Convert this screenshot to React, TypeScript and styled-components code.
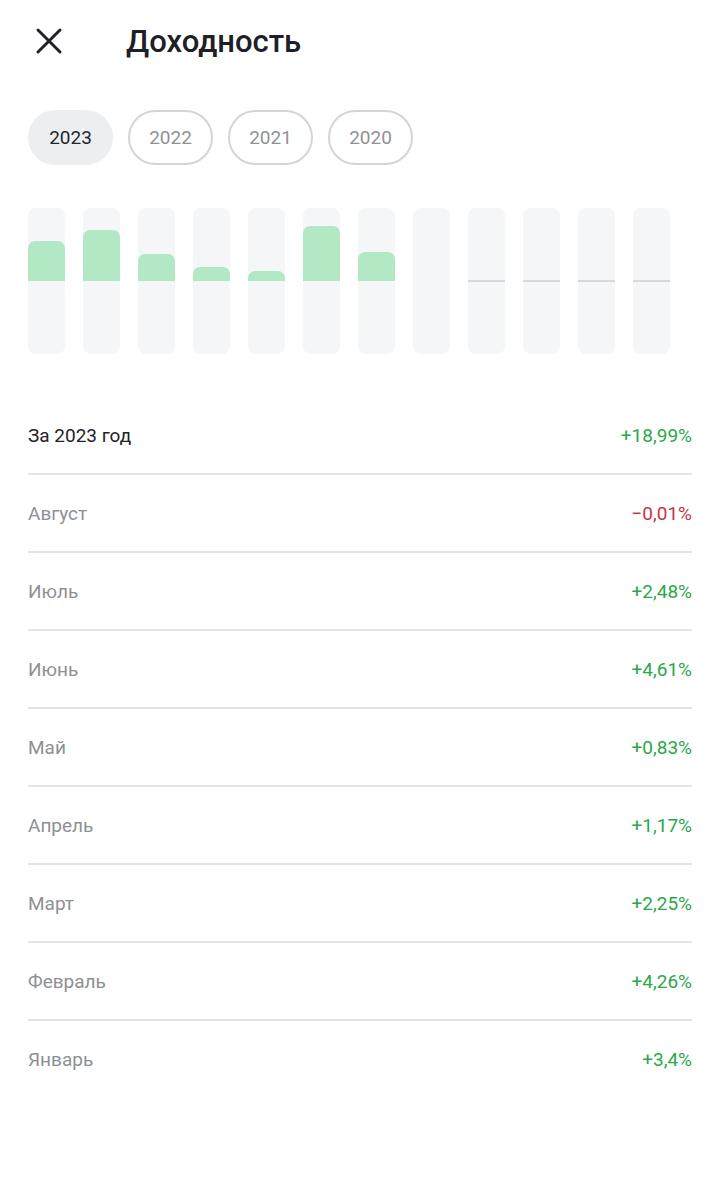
import React from "react";
import styled, { createGlobalStyle } from "styled-components";

const GlobalStyle = createGlobalStyle`
  body {
    margin: 0;
    background: #ffffff;
    font-family: Roboto, "Noto Sans", "Liberation Sans", sans-serif;
    -webkit-font-smoothing: antialiased;
  }
`;

const Page = styled.div`
  width: 720px;
  min-height: 1187px;
  background: #ffffff;
`;

const Header = styled.header`
  display: flex;
  align-items: center;
  height: 82px;
  padding-left: 35px;
`;

const CloseButton = styled.button`
  display: flex;
  align-items: center;
  justify-content: center;
  width: 28px;
  height: 28px;
  padding: 0;
  border: none;
  background: none;
  cursor: pointer;
`;

const Title = styled.h1`
  margin: 0 0 0 63px;
  color: #1d2026;
  font-size: 31px;
  font-weight: 500;
`;

const Chips = styled.div`
  display: flex;
  gap: 15px;
  padding: 28px 28px 0;
`;

const Chip = styled.button<{ $active?: boolean }>`
  width: 85px;
  height: 55px;
  border-radius: 28px;
  border: 2px solid ${({ $active }) => ($active ? "#eceef0" : "#d3d5d8")};
  background: ${({ $active }) => ($active ? "#eceef0" : "#ffffff")};
  color: ${({ $active }) => ($active ? "#24272d" : "#8e9196")};
  font-family: inherit;
  font-size: 19px;
  cursor: pointer;
`;

const Chart = styled.div`
  display: flex;
  gap: 18px;
  padding: 43px 28px 0;
`;

const Column = styled.div`
  display: flex;
  flex-direction: column;
  width: 37px;
  height: 146px;
  border-radius: 8px;
  background: #f5f6f8;
  overflow: hidden;
`;

const Half = styled.div<{ $top?: boolean }>`
  display: flex;
  flex-direction: column;
  justify-content: ${({ $top }) => ($top ? "flex-end" : "flex-start")};
  flex-shrink: 0;
  height: 73px;
`;

const Fill = styled.div`
  background: #b2e9c4;
  border-radius: 7px 7px 0 0;
`;

const ZeroLine = styled.div`
  flex-shrink: 0;
  height: 2px;
  margin: -1px 0;
  background: #d6d8dc;
`;

const List = styled.div`
  display: flex;
  flex-direction: column;
  padding: 43px 28px 0;
`;

const Row = styled.div`
  display: flex;
  align-items: center;
  justify-content: space-between;
  height: 76px;
  border-bottom: 2px solid #e3e4e6;

  &:last-child {
    border-bottom: none;
  }
`;

const Label = styled.span<{ $strong?: boolean }>`
  color: ${({ $strong }) => ($strong ? "#1f2228" : "#8d9095")};
  font-size: 19px;
`;

const Value = styled.span<{ $negative?: boolean }>`
  color: ${({ $negative }) => ($negative ? "#c8333f" : "#2aa84a")};
  font-size: 19px;
`;

const PX_PER_PERCENT = 11.9;

type Month = { name: string; value: number | null };

const months: Month[] = [
  { name: "Январь", value: 3.4 },
  { name: "Февраль", value: 4.26 },
  { name: "Март", value: 2.25 },
  { name: "Апрель", value: 1.17 },
  { name: "Май", value: 0.83 },
  { name: "Июнь", value: 4.61 },
  { name: "Июль", value: 2.48 },
  { name: "Август", value: -0.01 },
  { name: "Сентябрь", value: null },
  { name: "Октябрь", value: null },
  { name: "Ноябрь", value: null },
  { name: "Декабрь", value: null },
];

const formatValue = (v: number) => {
  const s = Math.abs(v).toString().replace(".", ",");
  return (v < 0 ? "−" : "+") + s + "%";
};

function CloseIcon() {
  return (
    <svg width="28" height="28" viewBox="0 0 28 28">
      <path
        d="M3 3 L25 25 M25 3 L3 25"
        stroke="#1f2229"
        strokeWidth="3"
        strokeLinecap="round"
      />
    </svg>
  );
}

export default function App() {
  const listed = months.filter((m) => m.value !== null).reverse();

  return (
    <Page>
      <GlobalStyle />
      <Header>
        <CloseButton aria-label="Закрыть">
          <CloseIcon />
        </CloseButton>
        <Title>Доходность</Title>
      </Header>

      <Chips>
        <Chip $active>2023</Chip>
        <Chip>2022</Chip>
        <Chip>2021</Chip>
        <Chip>2020</Chip>
      </Chips>

      <Chart>
        {months.map((m) => (
          <Column key={m.name}>
            <Half $top>
              {m.value !== null && m.value > 0.05 && (
                <Fill style={{ height: m.value * PX_PER_PERCENT }} />
              )}
            </Half>
            {m.value === null && <ZeroLine />}
            <Half />
          </Column>
        ))}
      </Chart>

      <List>
        <Row>
          <Label $strong>За 2023 год</Label>
          <Value>+18,99%</Value>
        </Row>
        {listed.map((m) => (
          <Row key={m.name}>
            <Label>{m.name}</Label>
            <Value $negative={(m.value ?? 0) < 0}>{formatValue(m.value ?? 0)}</Value>
          </Row>
        ))}
      </List>
    </Page>
  );
}
